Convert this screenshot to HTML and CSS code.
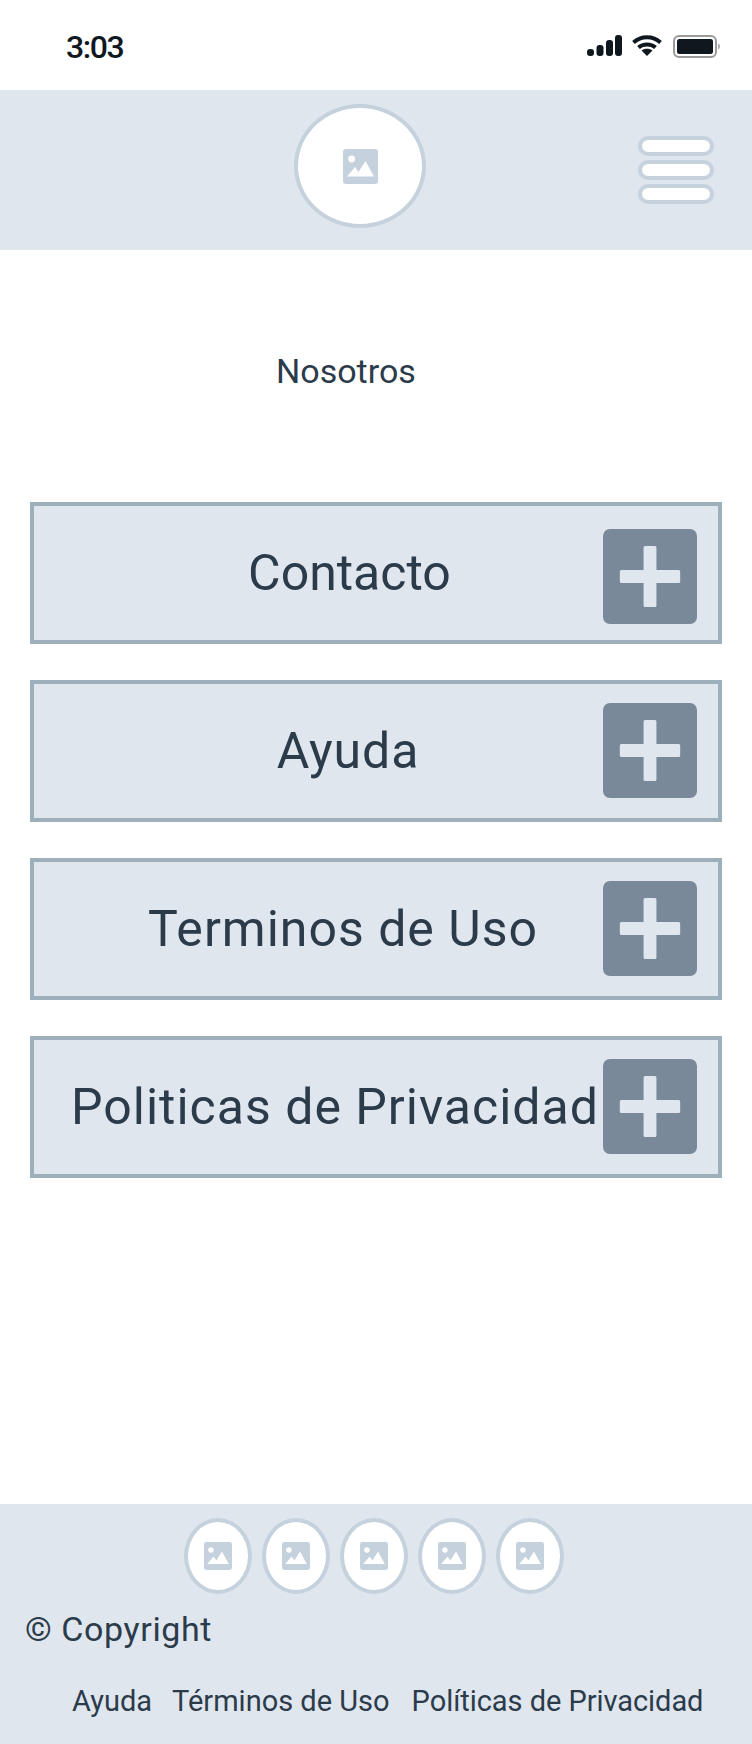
FILE: index.html
```html
<!DOCTYPE html>
<html lang="es">
<head>
<meta charset="utf-8">
<title>Nosotros</title>
<link rel="stylesheet" href="styles.css">
</head>
<body>
<svg class="defs" width="0" height="0" aria-hidden="true">
  <symbol id="pic" viewBox="0 0 35 35">
    <path fill="#c5d1dc" fill-rule="evenodd" d="M3 0h29a3 3 0 0 1 3 3v29a3 3 0 0 1-3 3H3a3 3 0 0 1-3-3V3a3 3 0 0 1 3-3zM12 10a3.400 3.400 0 1 0-6.800 0a3.400 3.400 0 1 0 6.800 0zM4 27.500h27L22.500 12l-7 11-3.500-5z"/>
  </symbol>
  <symbol id="plus" viewBox="0 0 95 95" preserveAspectRatio="none">
    <rect width="95" height="95" rx="7" fill="#7a8999"/>
    <path fill="#dfe6ee" d="M42.500 17h10a1.500 1.500 0 0 1 1.500 1.500V41h22.500a1.500 1.500 0 0 1 1.500 1.500v10a1.500 1.500 0 0 1-1.500 1.500H54v22.500a1.500 1.500 0 0 1-1.500 1.500h-10a1.500 1.500 0 0 1-1.500-1.500V54H18.500a1.500 1.500 0 0 1-1.500-1.500v-10a1.500 1.500 0 0 1 1.500-1.500H41V18.500a1.500 1.500 0 0 1 1.500-1.500z"/>
  </symbol>
</svg>

<div class="page">
  <div class="status">
    <span class="time">3:03</span>
    <div class="status-icons">
      <svg class="signal" viewBox="0 0 35 21" width="35" height="21">
        <rect x="0" y="14" width="7" height="7" rx="3" fill="#10181f"/>
        <rect x="9.500" y="10" width="7" height="11" rx="3" fill="#10181f"/>
        <rect x="19" y="5" width="7" height="16" rx="3" fill="#10181f"/>
        <rect x="28" y="0" width="7" height="21" rx="3" fill="#10181f"/>
      </svg>
      <svg class="wifi" viewBox="0 0 30 21" width="30" height="21">
        <path fill="none" stroke="#10181f" stroke-width="4" d="M1.500 7.500C9 .5 21 .5 28.500 7.500M6.500 12.500C11 8.500 19 8.500 23.500 12.500"/>
        <path fill="#10181f" d="M9.500 15.500c3-2.300 8-2.300 11 0L15 21z"/>
      </svg>
      <svg class="battery" viewBox="0 0 47 23" width="47" height="23">
        <rect x="1" y="1" width="42" height="21" rx="5" fill="#fff" stroke="#9a9a9a" stroke-width="2"/>
        <rect x="4" y="4" width="36" height="15" rx="2.500" fill="#10181f"/>
        <path fill="#b0b0b0" d="M45 8.500c1.300.4 2 1.600 2 3s-.7 2.600-2 3z"/>
      </svg>
    </div>
  </div>

  <header class="topbar">
    <div class="logo"><svg class="pic-lg"><use href="#pic"/></svg></div>
    <div class="burger"><span></span><span></span><span></span></div>
  </header>

  <main class="content">
    <h1 class="title">Nosotros</h1>
    <div class="cards">
      <section class="card card-contacto"><span class="label">Contacto</span><svg class="plus"><use href="#plus"/></svg></section>
      <section class="card card-ayuda"><span class="label">Ayuda</span><svg class="plus"><use href="#plus"/></svg></section>
      <section class="card card-terminos"><span class="label">Terminos de Uso</span><svg class="plus"><use href="#plus"/></svg></section>
      <section class="card card-politicas"><span class="label">Politicas de Privacidad</span><svg class="plus"><use href="#plus"/></svg></section>
    </div>
  </main>

  <footer class="footer">
    <div class="socials">
      <div class="social"><svg class="pic-sm"><use href="#pic"/></svg></div>
      <div class="social"><svg class="pic-sm"><use href="#pic"/></svg></div>
      <div class="social"><svg class="pic-sm"><use href="#pic"/></svg></div>
      <div class="social"><svg class="pic-sm"><use href="#pic"/></svg></div>
      <div class="social"><svg class="pic-sm"><use href="#pic"/></svg></div>
    </div>
    <p class="copyright">© Copyright</p>
    <nav class="links">
      <a>Ayuda</a>
      <a>Términos de Uso</a>
      <a class="link-last">Políticas de Privacidad</a>
    </nav>
  </footer>
</div>
</body>
</html>
```

FILE: styles.css
```css
* { box-sizing: border-box; }
html, body { margin: 0; padding: 0; background: #fff; }
body { font-family: Roboto, "Liberation Sans", sans-serif; color: #2b3b4a; }
.defs { display: block; height: 0; }
.page { width: 752px; height: 1744px; display: flex; flex-direction: column; overflow: hidden; }

.status { height: 90px; flex: none; display: flex; justify-content: space-between; align-items: flex-start; padding: 35px 32px 0 66px; }
.time { font-size: 32px; line-height: 25px; font-weight: 500; color: #10181f; letter-spacing: -1.400px; }
.status-icons { display: flex; align-items: flex-start; gap: 10px; }
.status-icons svg { display: block; }
.battery { margin-left: 1px; }

.topbar { height: 160px; flex: none; background: #dfe6ee; display: flex; align-items: flex-start; padding-left: 294px; padding-top: 14px; }
.logo { width: 132px; height: 124px; border-radius: 50%; border: 4px solid #c5d1dc; background: #fff; display: flex; align-items: center; justify-content: center; }
.pic-lg { width: 35px; height: 35px; }
.burger { margin-left: 212px; margin-top: 32px; display: flex; flex-direction: column; gap: 4px; }
.burger span { display: block; width: 76px; height: 20px; border: 4px solid #c5d1dc; border-radius: 10px; background: #fff; }

.content { flex: 1; padding: 0 30px; }
.title { margin: 0; padding: 101px 0 0 246px; font-size: 34px; line-height: 40px; font-weight: 400; height: 252px; }
.cards { display: flex; flex-direction: column; gap: 36px; }
.card { height: 142px; border: 4px solid #9eafbc; background: #dfe6ee; display: flex; align-items: center; padding-right: 21px; }
.label { flex: 1; font-size: 50px; line-height: 96px; text-align: center; white-space: nowrap; }
.plus { width: 94px; height: 95px; flex: none; margin-top: -1px; }
.card-contacto .plus { margin-top: 7px; }
.card-contacto .label { padding-left: 62px; }
.card-ayuda .label { padding-left: 59px; letter-spacing: 0.900px; }
.card-terminos .label { padding-left: 49px; letter-spacing: 1px; }
.card-politicas .label { padding-left: 33px; letter-spacing: 1px; }

.footer { height: 240px; flex: none; background: #dfe6ee; padding-top: 14px; }
.socials { display: flex; justify-content: center; gap: 10px; padding-right: 5px; }
.social { width: 68px; height: 76px; border-radius: 50%; border: 4px solid #c5d1dc; background: #fff; display: flex; align-items: center; justify-content: center; }
.pic-sm { width: 28px; height: 28px; }
.copyright { margin: 15px 0 0 25px; font-size: 34px; line-height: 40px; letter-spacing: 0.600px; }
.links { display: flex; gap: 20px; padding: 35px 0 0 72px; font-size: 29px; line-height: 34px; white-space: nowrap; }
.link-last { margin-left: 2px; letter-spacing: -0.050px; }
```
